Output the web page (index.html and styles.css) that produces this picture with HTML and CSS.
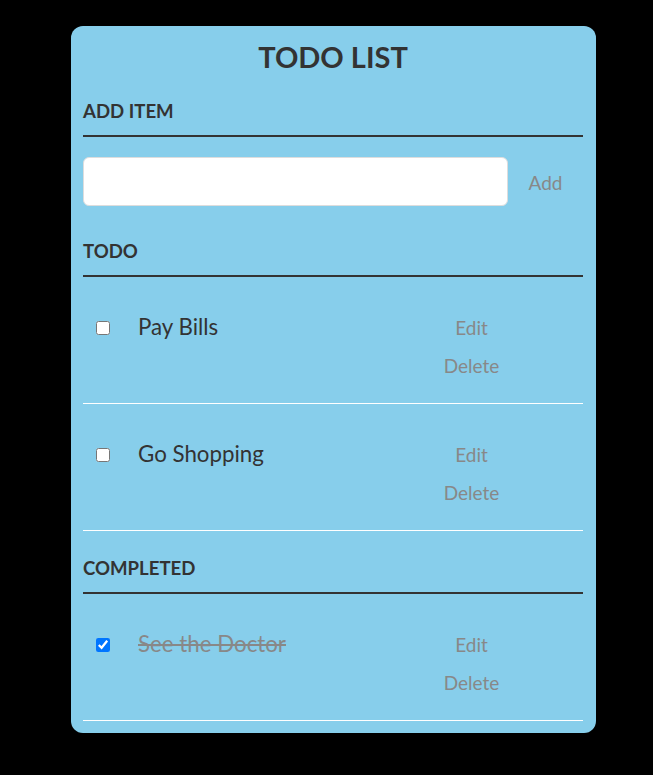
FILE: index.html
```html
<!DOCTYPE html>
<html>
<head>
<meta charset="utf-8">
<link rel="stylesheet" href="styles.css">
</head>
<body>
<div class="container">
  <h1 class="title">TODO LIST</h1>
  <h3 class="section">Add Item</h3>
  <div class="add-row">
    <input class="new-task" type="text">
    <button class="btn add-btn">Add</button>
  </div>
  <h3 class="section">Todo</h3>
  <ul class="list">
    <li class="item">
      <input class="check" type="checkbox">
      <label class="label">Pay Bills</label>
      <div class="actions">
        <button class="btn">Edit</button>
        <button class="btn">Delete</button>
      </div>
    </li>
    <li class="item">
      <input class="check" type="checkbox">
      <label class="label">Go Shopping</label>
      <div class="actions">
        <button class="btn">Edit</button>
        <button class="btn">Delete</button>
      </div>
    </li>
  </ul>
  <h3 class="section">Completed</h3>
  <ul class="list">
    <li class="item">
      <input class="check" type="checkbox" checked>
      <label class="label done">See the Doctor</label>
      <div class="actions">
        <button class="btn">Edit</button>
        <button class="btn">Delete</button>
      </div>
    </li>
  </ul>
</div>
</body>
</html>
```
FILE: styles.css
```css
html, body {
  margin: 0;
  padding: 0;
  background: #000;
}
body {
  font-family: Lato, "Open Sans", sans-serif;
  color: #333;
}
.container {
  width: 500px;
  margin: 26px 0 0 71px;
  padding: 0 13px 11px 12px;
  background: #87ceeb;
  border-radius: 12px;
}
.title {
  margin: 0;
  padding-top: 12px;
  font-size: 29px;
  line-height: 37px;
  font-weight: 700;
  text-align: center;
  color: #333;
}
.section {
  margin: 0;
  padding: 25px 0 13px;
  font-size: 18.6px;
  line-height: 22px;
  font-weight: 700;
  text-transform: uppercase;
  border-bottom: 2px solid #333;
  color: #333;
}
.add-row {
  display: flex;
  align-items: center;
  padding: 20px 0 9px;
}
.new-task {
  box-sizing: border-box;
  width: 425px;
  height: 49px;
  margin: 0;
  padding: 0 10px;
  border: 1px solid #ddd;
  border-radius: 6px;
  background: #fff;
  font-family: Lato, sans-serif;
  font-size: 18px;
}
.btn {
  background: none;
  border: 0;
  padding: 0;
  margin: 0;
  color: #888;
  font-family: Lato, sans-serif;
  font-size: 19px;
  line-height: 38px;
}
.add-btn {
  width: 75px;
  text-align: center;
  padding-top: 2px;
}
.list {
  list-style: none;
  margin: 0;
  padding: 0 0 1px;
}
.item {
  display: flex;
  align-items: flex-start;
  padding: 32px 0 18px;
  border-bottom: 1px solid #fff;
}
.check {
  width: 14px;
  height: 14px;
  margin: 12px 0 0 13px;
}
.label {
  width: 302px;
  margin-left: 28px;
  font-size: 22.3px;
  line-height: 35px;
  color: #333;
}
.label.done {
  color: #888;
  text-decoration: line-through;
}
.actions {
  display: flex;
  flex-direction: column;
  width: 63px;
  align-items: center;
}
```
